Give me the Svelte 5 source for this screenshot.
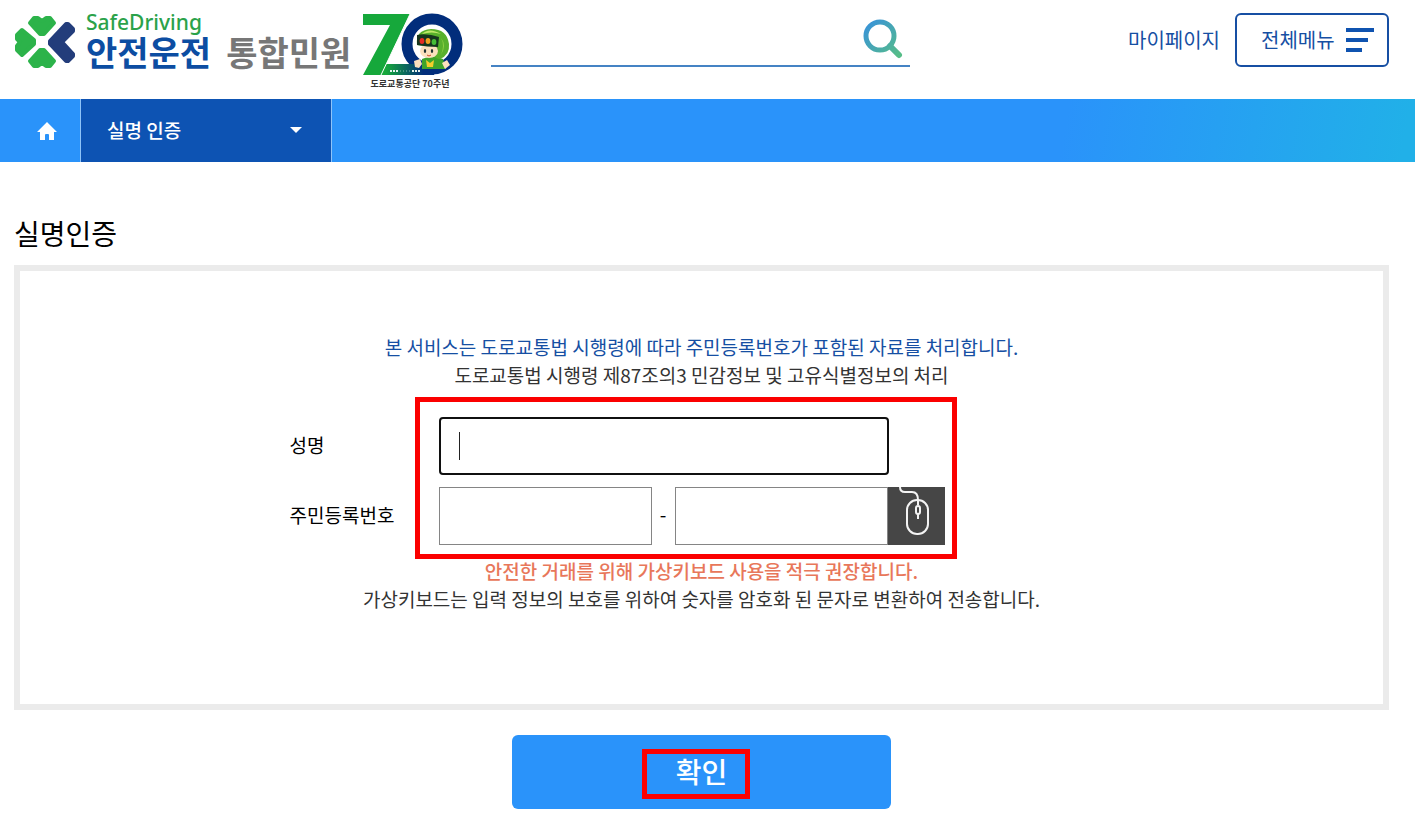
<script lang="ts">
  let keyword = $state('');
  let userName = $state('');
  let juminFront = $state('');
  let juminBack = $state('');
</script>

<header class="header">
  <a class="logo" href="#main" aria-label="안전운전 통합민원">
    <svg class="clover" viewBox="0 0 62 56" aria-hidden="true">
      <g fill="#2cb34a" stroke="#2cb34a" stroke-width="4" stroke-linejoin="round">
        <path d="M16 8L20 3H24L28 6L32 3H36L40 8L30 19H26Z" />
        <path d="M8 15L3 20V24L6 27L3 31V35L8 40L20 29V25Z" />
        <path d="M16 46L20 51H24L28 48L32 51H36L40 46L30 35H26Z" />
      </g>
      <path
        d="M36 26L52 9H54L59 14V16L48 27L59 39V41L54 46H52L36 29Z"
        fill="#233d7b"
        stroke="#233d7b"
        stroke-width="4"
        stroke-linejoin="round"
      />
    </svg>
    <span class="logo-text">
      <span class="logo-en">SafeDriving</span>
      <span class="logo-ko">안전운전 <em>통합민원</em></span>
    </span>
    <svg class="anniversary" viewBox="0 0 102 78" role="img" aria-label="도로교통공단 70주년">
      <defs>
        <linearGradient id="bar" x1="0" x2="1">
          <stop offset="0.1" stop-color="#16a83b" />
          <stop offset="0.75" stop-color="#012d7b" />
        </linearGradient>
      </defs>
      <circle cx="70" cy="31" r="25" fill="#fff" stroke="#012d7b" stroke-width="11" />
      <path d="M24 51H76L72 62H18Z" fill="url(#bar)" />
      <path d="M1 1H48L19 62H1L28 12H1Z" fill="#16a83b" />
      <path d="M48 1L19 62" stroke="#fff" stroke-width="1" />
      <path d="M28 58H36M50 58H59" stroke="#e6f4f0" stroke-width="2" stroke-dasharray="2 1" />
      <path d="M38 58H49" stroke="#7fb8a8" stroke-width="1" stroke-dasharray="1 2" />
      <!-- mascot -->
      <path d="M60 46Q70 41 81 46L84 56H60Z" fill="#3da42b" />
      <path d="M55 32Q53 17 69 16Q85 16 87 31Q88 42 78 46Q70 46 70 34Z" fill="#58b02c" />
      <path d="M60 21Q67 14 79 21Q70 18 60 21Z" fill="#c0e868" />
      <path d="M79 25Q85 32 79 42Q83 32 79 25Z" fill="#8ed044" />
      <ellipse cx="67" cy="38" rx="9" ry="7" fill="#fbe0bd" />
      <path d="M55 22Q65 20 77 24L76 34Q65 34 55 32Z" fill="#15351e" />
      <ellipse cx="60" cy="28" rx="2.4" ry="3" fill="#e62b22" />
      <ellipse cx="66" cy="28" rx="2.4" ry="3" fill="#f1a21e" />
      <ellipse cx="72" cy="29" rx="2.4" ry="3" fill="#45bd37" />
      <ellipse cx="63" cy="38" rx="1.2" ry="2" fill="#223333" />
      <ellipse cx="70" cy="38" rx="1.2" ry="2" fill="#223333" />
      <path d="M65 42Q67 44 69 42" fill="none" stroke="#d34828" />
      <path d="M64 47L68 50L72 47L71 54H65Z" fill="#f4ce2b" />
      <path d="M52 48L58 46L60 51L57 55L53 54Z M80 50L85 47L88 52L83 56Z" fill="#fbe0bd" />
      <text x="48" y="74" text-anchor="middle">도로교통공단 70주년</text>
    </svg>
  </a>

  <form class="search" role="search">
    <input type="search" aria-label="검색" bind:value={keyword} />
    <button type="submit" aria-label="검색">
      <svg viewBox="0 0 40 40" aria-hidden="true">
        <defs>
          <linearGradient id="lens" x1="0" y1="0" x2="40" y2="40" gradientUnits="userSpaceOnUse">
            <stop offset=".15" stop-color="#3b96d3" />
            <stop offset=".9" stop-color="#56bd88" />
          </linearGradient>
        </defs>
        <g fill="none" stroke="url(#lens)" stroke-width="5">
          <circle cx="17" cy="17" r="14" />
          <path d="M27 27L36 36" stroke-width="6" stroke-linecap="round" />
        </g>
      </svg>
    </button>
  </form>

  <div class="util">
    <a href="#mypage">마이페이지</a>
    <button class="menu-btn" type="button">
      전체메뉴
      <span class="bars"><i></i><i></i><i></i></span>
    </button>
  </div>
</header>

<nav class="location">
  <a class="home" href="#home" aria-label="홈">
    <svg viewBox="0 0 20 18" aria-hidden="true">
      <path d="M10 0L20 10H17V18H12V13Q12 12 11 12H9Q8 12 8 13V18H3V10H0Z" fill="#fff" />
    </svg>
  </a>
  <button class="crumb" type="button">
    실명 인증
    <span class="arrow"></span>
  </button>
</nav>

<main class="content" id="main">
  <h1>실명인증</h1>

  <section class="panel">
    <p class="blue">본 서비스는 도로교통법 시행령에 따라 주민등록번호가 포함된 자료를 처리합니다.</p>
    <p>도로교통법 시행령 제87조의3 민감정보 및 고유식별정보의 처리</p>

    <div class="form">
      <div class="labels">
        <label for="userName">성명</label>
        <label for="juminFront">주민등록번호</label>
      </div>
      <div class="fields">
        <div class="name-field">
          <input id="userName" type="text" bind:value={userName} />
          <span class="cursor"></span>
        </div>
        <div class="jumin">
          <input id="juminFront" type="text" maxlength="6" bind:value={juminFront} />
          <span class="dash">-</span>
          <input type="password" maxlength="7" aria-label="주민등록번호 뒷자리" bind:value={juminBack} />
          <button class="keypad" type="button" aria-label="가상키보드">
            <svg viewBox="0 0 57 58" aria-hidden="true">
              <g fill="none" stroke="#f4f4f4" stroke-width="2">
                <path d="M12 0Q12 5 17 5H24Q30 5 30 13" />
                <rect x="19" y="13" width="21" height="34" rx="10" />
                <path d="M30 13V18M30 27V32" />
                <rect x="28" y="19" width="4" height="8" rx="2" />
              </g>
            </svg>
          </button>
        </div>
        <span class="mark"></span>
      </div>
    </div>

    <p class="warn">안전한 거래를 위해 가상키보드 사용을 적극 권장합니다.</p>
    <p>가상키보드는 입력 정보의 보호를 위하여 숫자를 암호화 된 문자로 변환하여 전송합니다.</p>
  </section>

  <button class="submit" type="button">
    확인
    <span class="mark"></span>
  </button>
</main>

<style>
  :global(body) {
    margin: 0;
    background: #fff;
    color: #333;
    font-family: 'Noto Sans CJK KR', 'Noto Sans', sans-serif;
    font-size: 19px;
    line-height: 28px;
  }

  :global(*) {
    box-sizing: border-box;
  }

  a {
    color: inherit;
    text-decoration: none;
  }

  button,
  input {
    font: inherit;
    border: 0;
    border-radius: 0;
    outline: 0;
    background: none;
  }

  button {
    cursor: pointer;
  }

  .header {
    display: flex;
    align-items: flex-start;
    height: 99px;
    padding: 13px 26px 0 14px;
  }

  .logo {
    display: flex;
    flex-shrink: 0;
  }

  .clover {
    width: 62px;
    height: 56px;
    margin-top: 2px;
  }

  .logo-text {
    display: flex;
    flex-direction: column;
    padding-left: 10px;
    white-space: nowrap;
  }

  .logo-en {
    color: #2ba24a;
    font-family: 'Noto Sans', sans-serif;
    font-size: 21px;
    font-weight: 500;
    line-height: 18px;
  }

  .logo-ko {
    display: flex;
    gap: 15px;
    color: #0c4da2;
    font-size: 34px;
    font-weight: 700;
    line-height: 42px;
  }

  .logo-ko em {
    color: #777;
    font-style: normal;
  }

  .anniversary {
    width: 102px;
    height: 78px;
    margin-left: 11px;
  }

  .anniversary text {
    fill: #333;
    font-size: 9px;
    font-weight: 700;
  }

  .search {
    display: flex;
    flex: 0 1 419px;
    height: 54px;
    margin-left: 27px;
    border-bottom: 2px solid #4583c4;
  }

  .search input {
    flex: 1;
    min-width: 0;
    padding: 0 12px;
  }

  .search button {
    width: 54px;
    padding: 4px 7px;
  }

  .search svg {
    display: block;
    width: 40px;
    height: 40px;
  }

  .util {
    display: flex;
    align-items: center;
    gap: 15px;
    margin-left: auto;
    color: #164fa3;
    font-size: 20px;
    white-space: nowrap;
  }

  .menu-btn {
    display: flex;
    align-items: center;
    justify-content: space-between;
    width: 154px;
    height: 54px;
    padding: 0 13px 0 24px;
    border: 2px solid #164fa3;
    border-radius: 6px;
    color: inherit;
  }

  .bars {
    display: grid;
    gap: 6px;
    width: 28px;
  }

  .bars i {
    height: 4px;
    background: #0f53b0;
  }

  .bars i:nth-child(2) {
    width: 22px;
  }

  .bars i:nth-child(3) {
    width: 16px;
  }

  .location {
    display: flex;
    height: 63px;
    background: linear-gradient(100deg, #2a93fa 75%, #21b0e8 99%);
  }

  .home {
    display: flex;
    align-items: center;
    justify-content: flex-end;
    width: 81px;
    padding-right: 23px;
    border-right: 1px solid #8fc4f8;
  }

  .home svg {
    width: 20px;
    height: 18px;
  }

  .crumb {
    display: flex;
    align-items: center;
    justify-content: space-between;
    width: 251px;
    padding: 0 29px 2px 26px;
    border-right: 1px solid #8fc4f8;
    background: #0d53b3;
    color: #fff;
    font-weight: 500;
  }

  .arrow {
    border: 6px solid transparent;
    border-top-color: #fff;
    border-bottom: 0;
  }

  .content {
    padding: 50px 26px 16px 14px;
  }

  h1 {
    margin: 0 0 11px;
    color: #000;
    font-size: 28px;
    font-weight: 400;
    line-height: 42px;
  }

  .panel {
    padding: 62px 0 91px;
    border: 6px solid #ebebeb;
    text-align: center;
  }

  .panel p {
    margin: 0;
  }

  .panel .blue {
    color: #164fa3;
  }

  .panel .warn {
    color: #e8775a;
    font-weight: 500;
  }

  .form {
    display: flex;
    width: 824px;
    max-width: 100%;
    margin: 0 auto;
    padding: 28px 0 12px;
    color: #000;
    text-align: left;
  }

  .labels,
  .fields {
    display: flex;
    flex-direction: column;
  }

  .labels {
    gap: 14px;
    width: 149px;
  }

  .labels label {
    line-height: 56px;
  }

  .fields {
    position: relative;
    gap: 12px;
    width: 506px;
  }

  .fields .mark {
    inset: -20px -12px -14px -24px;
  }

  .name-field {
    position: relative;
    width: 450px;
  }

  .name-field input {
    display: block;
    width: 100%;
    height: 58px;
    padding: 0 18px;
    border: 2px solid #101010;
    border-radius: 4px;
  }

  .cursor {
    position: absolute;
    top: 15px;
    left: 20px;
    width: 1px;
    height: 28px;
    background: #222;
  }

  .jumin {
    display: flex;
    height: 58px;
  }

  .jumin input {
    width: 213px;
    padding: 0 18px;
    border: 1px solid #858585;
  }

  .dash {
    width: 23px;
    line-height: 54px;
    text-align: center;
  }

  .keypad {
    flex: 1;
    padding: 0;
    background: #464646;
  }

  .keypad svg {
    display: block;
    width: 57px;
    height: 58px;
  }

  .mark {
    position: absolute;
    border: 5px solid #fb0000;
    pointer-events: none;
  }

  .submit {
    position: relative;
    display: block;
    width: 379px;
    height: 74px;
    margin: 25px auto 0;
    padding: 0 0 2px;
    border-radius: 6px;
    background: #2a93fa;
    color: #fff;
    font-size: 28px;
    font-weight: 500;
  }

  .submit .mark {
    inset: 14px 141px 10px 130px;
  }
</style>
